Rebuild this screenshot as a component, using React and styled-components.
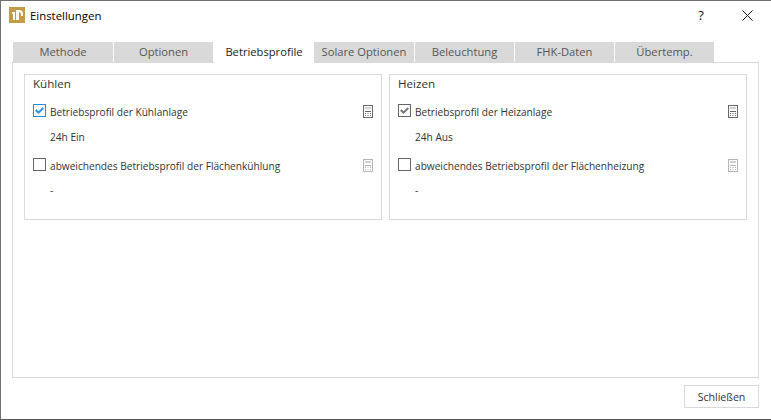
import React from 'react';
import styled, { createGlobalStyle } from 'styled-components';

const Global = createGlobalStyle`
  html, body {
    margin: 0;
    background: #fff;
  }
  * {
    box-sizing: border-box;
  }
`;

const Window = styled.div`
  width: 771px;
  height: 420px;
  display: flex;
  flex-direction: column;
  border: 1px solid #6f6f6f;
  border-right: none;
  border-bottom-color: #555;
  background: #fff;
  color: #222;
  font-family: 'Open Sans', 'Noto Sans', sans-serif;
  font-size: 10px;
  overflow: hidden;
`;

const TitleBar = styled.div`
  height: 30px;
  flex: none;
  display: flex;
  align-items: center;
  padding: 0 1px 2px 8px;
`;

const Title = styled.div`
  flex: 1;
  margin-left: 5px;
  font-size: 11.4px;
  color: #000;
`;

const WinButton = styled.div`
  width: 46px;
  height: 28px;
  display: flex;
  align-items: center;
  justify-content: center;
  color: #111;
  font-size: 13px;
`;

const Body = styled.div`
  flex: 1;
  display: flex;
  flex-direction: column;
  padding: 11px 12px 11px 11px;
`;

const TabRow = styled.div`
  display: flex;
  padding-left: 1px;
  height: 20px;
  flex: none;
`;

const Tab = styled.div`
  width: ${(p) => p.$w}px;
  margin-right: ${(p) => (p.$active ? 0 : 1)}px;
  height: ${(p) => (p.$active ? 21 : 20)}px;
  padding-bottom: ${(p) => (p.$active ? 3 : 2)}px;
  position: relative;
  z-index: ${(p) => (p.$active ? 1 : 0)};
  display: flex;
  align-items: center;
  justify-content: center;
  background: ${(p) => (p.$active ? '#fff' : '#d9d9d9')};
  color: ${(p) => (p.$active ? '#222' : '#555')};
  font-size: 11.2px;
`;

const Panel = styled.div`
  flex: 1;
  display: flex;
  flex-direction: column;
  border: 1px solid #d9d9d9;
  padding: 11px 11px 0;
`;

const Columns = styled.div`
  display: flex;
  gap: 7px;
`;

const Group = styled.div`
  width: 358px;
  height: 146px;
  border: 1px solid #d9d9d9;
  padding: 0 8px;
`;

const GroupTitle = styled.div`
  font-size: 11.6px;
  line-height: 16px;
  margin-top: 1px;
  color: #333;
`;

const CheckRow = styled.div`
  display: flex;
  align-items: center;
  height: 17px;
  margin-top: ${(p) => p.$top}px;
`;

const Box = styled.div`
  width: 13px;
  height: 13px;
  flex: none;
  display: flex;
  align-items: center;
  justify-content: center;
  border: 1px solid ${(p) => p.$color || '#666'};
  margin-top: -3px;
`;

const Label = styled.div`
  flex: 1;
  margin-left: 4px;
  font-size: 10.15px;
  color: #333;
`;

const Value = styled.div`
  margin: ${(p) => p.$top}px 0 0 17px;
  font-size: 10.15px;
  line-height: 14px;
  color: #333;
`;

const CalcSlot = styled.div`
  width: 10px;
  display: flex;
`;

const Footer = styled.div`
  flex: none;
  display: flex;
  justify-content: flex-end;
  padding-top: 7px;
`;

const CloseButton = styled.div`
  width: 75px;
  height: 23px;
  display: flex;
  align-items: center;
  justify-content: center;
  border: 1px solid #d9d9d9;
  font-size: 10.6px;
  color: #333;
`;

const AppIcon = () => (
  <svg width="16" height="16" viewBox="0 0 16 16">
    <rect width="16" height="16" fill="#c39a45" />
    <path d="M3 5h3v8H4V7H3zM7 3h3c3 0 4 2 4 4v2h-2V7c0-1-1-2-2-2v8H7z" fill="#fff" />
  </svg>
);

const Calc = ({ color }) => (
  <svg width="10" height="13" viewBox="0 0 10 13">
    <rect x="0.5" y="0.5" width="9" height="12" fill="#fff" stroke={color} />
    <rect x="2" y="2" width="6" height="2" fill="#d0d0d0" />
    <path d="M2 6h6v1H2zM2 8h1v1H2zM4.5 8h1v1h-1zM7 8h1v1H7zM2 10h1v1H2zM4.5 10h1v1h-1zM7 10h1v1H7z" fill={color} />
  </svg>
);

const Check = ({ color }) => (
  <svg width="9" height="7" viewBox="0 0 9 7">
    <path d="M0.7 3l2.8 2.6L8.3 1" fill="none" stroke={color} strokeWidth="2" />
  </svg>
);

const tabs = ['Methode', 'Optionen', 'Betriebsprofile', 'Solare Optionen', 'Beleuchtung', 'FHK-Daten', 'Übertemp.'];

const ProfileGroup = ({ title, main, value, other, boxColor, checkColor }) => (
  <Group>
    <GroupTitle>{title}</GroupTitle>
    <CheckRow $top={11}>
      <Box $color={boxColor}>
        <Check color={checkColor} />
      </Box>
      <Label>{main}</Label>
      <CalcSlot>
        <Calc color="#666" />
      </CalcSlot>
    </CheckRow>
    <Value $top={10}>{value}</Value>
    <CheckRow $top={13}>
      <Box />
      <Label>{other}</Label>
      <CalcSlot>
        <Calc color="#b5b5b5" />
      </CalcSlot>
    </CheckRow>
    <Value $top={9}>-</Value>
  </Group>
);

export default function App() {
  return (
    <Window>
      <Global />
      <TitleBar>
        <AppIcon />
        <Title>Einstellungen</Title>
        <WinButton>?</WinButton>
        <WinButton>
          <svg width="11" height="11" viewBox="0 0 11 11">
            <path d="M0.5 0.5l10 10M10.5 0.5l-10 10" stroke="#111" fill="none" />
          </svg>
        </WinButton>
      </TitleBar>
      <Body>
        <TabRow>
          {tabs.map((t, i) => (
            <Tab key={t} $active={i === 2} $w={i === 0 || i === 2 || i === 3 ? 100 : 99}>
              {t}
            </Tab>
          ))}
        </TabRow>
        <Panel>
          <Columns>
            <ProfileGroup
              title="Kühlen"
              main="Betriebsprofil der Kühlanlage"
              value="24h Ein"
              other="abweichendes Betriebsprofil der Flächenkühlung"
              boxColor="#1e90e0"
              checkColor="#2a95e5"
            />
            <ProfileGroup
              title="Heizen"
              main="Betriebsprofil der Heizanlage"
              value="24h Aus"
              other="abweichendes Betriebsprofil der Flächenheizung"
              boxColor="#666"
              checkColor="#777"
            />
          </Columns>
        </Panel>
        <Footer>
          <CloseButton>Schließen</CloseButton>
        </Footer>
      </Body>
    </Window>
  );
}
